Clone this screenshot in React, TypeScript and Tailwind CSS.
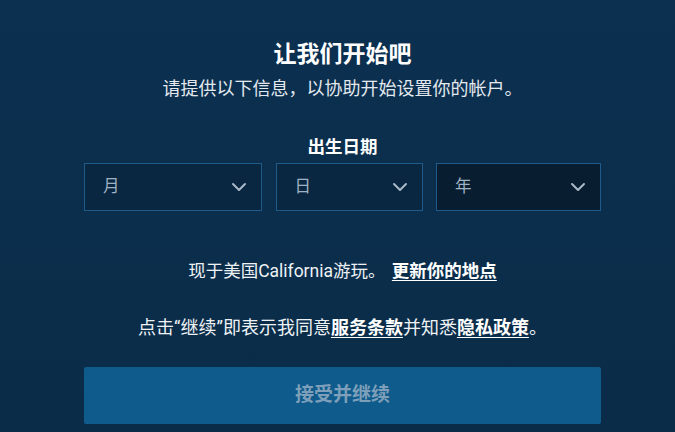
import { ChevronDown } from "lucide-react";

const font = { fontFamily: 'Roboto, "Noto Sans CJK SC", sans-serif' };

function DateSelect({ label, width, dark }: { label: string; width: string; dark?: boolean }) {
  return (
    <div
      className={`flex h-[48px] items-center justify-between border border-[#1e5b8b] pl-[18px] pr-[10px] ${width} ${
        dark ? "bg-[#081d30]" : "bg-[#0a2741]"
      }`}
    >
      <span className="text-[16.5px] text-[#9fb2c3]">{label}</span>
      <ChevronDown className="h-[24px] w-[24px] text-[#a9b9c7]" strokeWidth={2} />
    </div>
  );
}

export default function App() {
  return (
    <div
      style={font}
      className="h-[432px] w-[675px] overflow-hidden bg-gradient-to-b from-[#0c3050] to-[#0a2c48] text-white"
    >
      <div className="ml-[84px] flex w-[517px] flex-col items-center pt-[40px]">
        <h1 className="text-[23px] font-bold leading-[30px]">让我们开始吧</h1>
        <p className="mt-[6px] text-[18px] leading-[26px] text-[#e3e9ef]">
          请提供以下信息，以协助开始设置你的帐户。
        </p>

        <h2 className="mt-[33px] text-[17.5px] font-bold leading-[24px]">出生日期</h2>
        <div className="mt-[4px] flex w-full justify-between">
          <DateSelect label="月" width="w-[178px]" />
          <DateSelect label="日" width="w-[147px]" />
          <DateSelect label="年" width="w-[165px]" dark />
        </div>

        <p className="mt-[47px] text-[17.5px] leading-[26px] text-[#eef2f5]">
          现于美国California游玩。{" "}
          <a href="#" className="ml-[2px] font-bold text-white underline underline-offset-[3px]">
            更新你的地点
          </a>
        </p>

        <p className="mt-[31px] text-[18px] leading-[26px] text-[#eef2f5]">
          点击“继续”即表示我同意
          <a href="#" className="font-bold text-white underline underline-offset-[3px]">
            服务条款
          </a>
          并知悉
          <a href="#" className="font-bold text-white underline underline-offset-[3px]">
            隐私政策
          </a>
          。
        </p>

        <button
          type="button"
          className="mt-[26px] h-[57px] w-full rounded-[2px] bg-[#0e5b8c] text-[19px] font-bold text-[#7e9fb9]"
        >
          接受并继续
        </button>
      </div>
    </div>
  );
}
